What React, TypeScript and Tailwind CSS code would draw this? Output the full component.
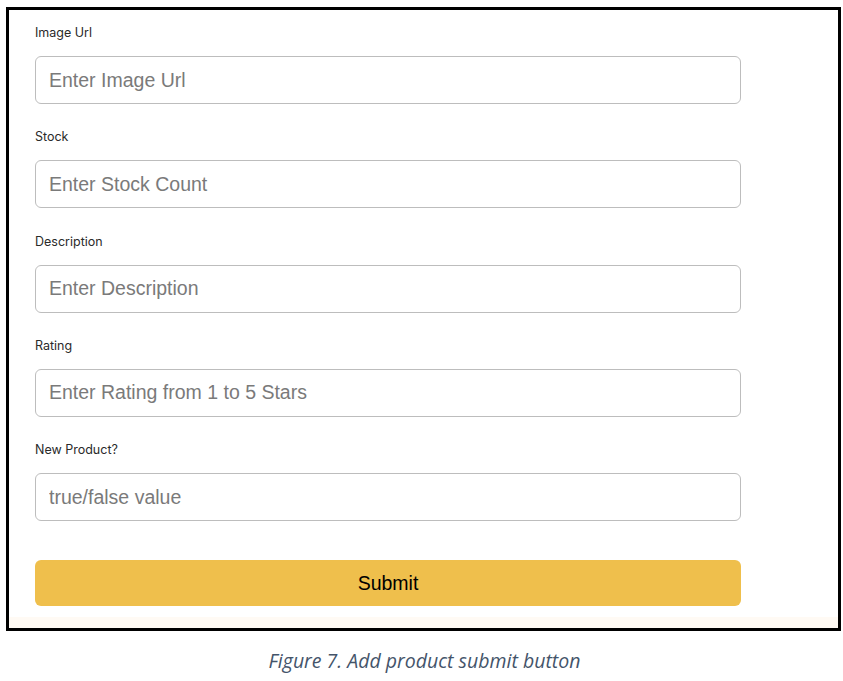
import React from "react";

const fields = [
  { label: "Image Url", placeholder: "Enter Image Url" },
  { label: "Stock", placeholder: "Enter Stock Count" },
  { label: "Description", placeholder: "Enter Description" },
  { label: "Rating", placeholder: "Enter Rating from 1 to 5 Stars" },
  { label: "New Product?", placeholder: "true/false value" },
];

const App: React.FC = () => {
  return (
    <div className="w-[843px] h-[681px] bg-white">
      <div className="pt-[7px] pl-[6px]">
        <div className="w-[835px] h-[624px] border-[3px] border-black bg-white flex flex-col">
          <form
            className="flex-1 pl-[26px] pt-[15px] flex flex-col"
            onSubmit={(e) => e.preventDefault()}
          >
            {fields.map((field) => (
              <div key={field.label} className="flex flex-col mb-[25.3px]">
                <label
                  className="h-[16px] leading-[16px] text-[12.5px] text-[#2a2a2a]"
                  style={{ fontFamily: "Inter, 'Noto Sans', sans-serif" }}
                >
                  {field.label}
                </label>
                <input
                  type="text"
                  placeholder={field.placeholder}
                  className="mt-[15px] w-[706px] h-[48px] rounded-md border-[1.5px] border-[#bdbdbd] px-[13px] text-[19.5px] text-[#333] placeholder:text-[#7a7a7a] outline-none"
                  style={{ fontFamily: "'Liberation Sans', Arial, sans-serif" }}
                />
              </div>
            ))}
            <button
              type="submit"
              className="mt-[14px] w-[706px] h-[46px] rounded-md bg-[#efbf4c] text-[19.5px] text-black"
              style={{ fontFamily: "'Liberation Sans', Arial, sans-serif" }}
            >
              Submit
            </button>
          </form>
          <div className="h-[11px] bg-[#fffaf4]" />
        </div>
      </div>
      <p
        className="mt-[15px] text-center italic text-[19.5px] text-[#44546a] pl-[6px]"
        style={{ fontFamily: "'Open Sans', sans-serif" }}
      >
        Figure 7. Add product submit button
      </p>
    </div>
  );
};

export default App;
